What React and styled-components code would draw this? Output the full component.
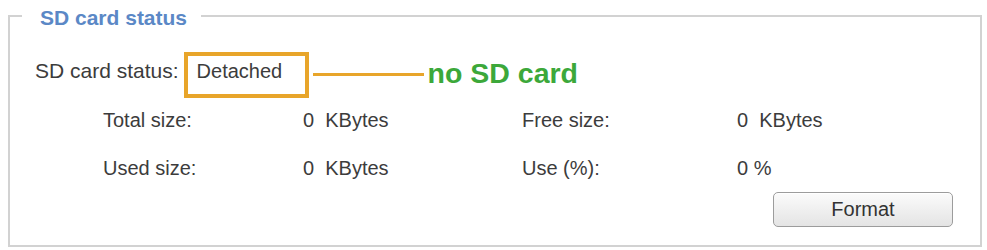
import React from "react";
import styled, { createGlobalStyle } from "styled-components";

const Global = createGlobalStyle`
  html, body { margin: 0; padding: 0; background: #ffffff; }
  body { font-family: "Liberation Sans", Arial, sans-serif; color: #3c3c3c; }
`;

const Panel = styled.fieldset`
  box-sizing: border-box;
  width: 974px;
  margin: 1px 0 0 8px;
  padding: 0 12px 18px 12px;
  border: 2px solid #d2d2d2;
  min-width: 0;
`;

const Legend = styled.legend`
  padding: 5px 14px 0 18px;
  font-size: 21px;
  line-height: 24px;
  font-weight: bold;
  color: #5b88c6;
`;

const Content = styled.div`
  padding: 22px 15px 0 13px;
  display: flex;
  flex-direction: column;
`;

const StatusRow = styled.div`
  display: flex;
  align-items: flex-start;
  height: 46px;
`;

const Text = styled.span`
  font-size: 20px;
  line-height: 24px;
  color: #3c3c3c;
  white-space: pre;
`;

const StatusLabel = styled(Text)`
  font-size: 21px;
  margin-top: 7px;
  margin-right: 5px;
`;

const Highlight = styled.div`
  box-sizing: border-box;
  width: 125px;
  height: 46px;
  border: 4px solid #e8a52a;
  padding: 3px 0 0 9px;
`;

const Connector = styled.div`
  width: 111px;
  height: 3px;
  margin: 21px 4px 0 4px;
  background: #e8a52a;
`;

const Note = styled.span`
  margin-top: 5px;
  font-size: 28.5px;
  line-height: 32px;
  font-weight: bold;
  color: #3ca83a;
`;

const Stats = styled.div`
  display: grid;
  grid-template-columns: 200px 219px 215px 1fr;
  row-gap: 24px;
  margin: 10px 0 0 68px;
`;

const Actions = styled.div`
  display: flex;
  justify-content: flex-end;
  margin-top: 12px;
`;

const Button = styled.button`
  box-sizing: border-box;
  width: 180px;
  height: 35px;
  border: 1px solid #9c9c9c;
  border-radius: 5px;
  background: linear-gradient(#fbfbfb, #e4e4e4);
  box-shadow: inset 0 1px 0 #ffffff;
  font-family: "Liberation Sans", Arial, sans-serif;
  font-size: 20px;
  color: #333333;
  padding: 0;
`;

const stats = [
  ["Total size:", "0\u00a0 KBytes", "Free size:", "0\u00a0 KBytes"],
  ["Used size:", "0\u00a0 KBytes", "Use (%):", "0 %"],
];

export default function App() {
  return (
    <>
      <Global />
      <Panel>
        <Legend>SD card status</Legend>
        <Content>
          <StatusRow>
            <StatusLabel>SD card status:</StatusLabel>
            <Highlight>
              <Text>Detached</Text>
            </Highlight>
            <Connector />
            <Note>no SD card</Note>
          </StatusRow>
          <Stats>
            {stats.flat().map((t, i) => (
              <Text key={i}>{t}</Text>
            ))}
          </Stats>
          <Actions>
            <Button>Format</Button>
          </Actions>
        </Content>
      </Panel>
    </>
  );
}
